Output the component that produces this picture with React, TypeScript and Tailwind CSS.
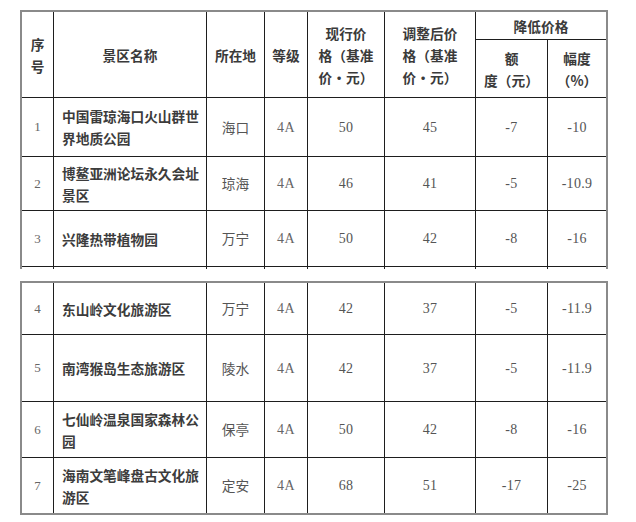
const cols = 'grid-cols-[31px_152px_57px_42px_76px_90px_71px_58px]';

type Row = {
  no: string;
  name: string[];
  place: string;
  level: string;
  now: string;
  after: string;
  diff: string;
  pct: string;
};

const topRows: Row[] = [
  { no: '1', name: ['中国雷琼海口火山群世', '界地质公园'], place: '海口', level: '4A', now: '50', after: '45', diff: '-7', pct: '-10' },
  { no: '2', name: ['博鳌亚洲论坛永久会址', '景区'], place: '琼海', level: '4A', now: '46', after: '41', diff: '-5', pct: '-10.9' },
  { no: '3', name: ['兴隆热带植物园'], place: '万宁', level: '4A', now: '50', after: '42', diff: '-8', pct: '-16' },
];

const bottomRows: Row[] = [
  { no: '4', name: ['东山岭文化旅游区'], place: '万宁', level: '4A', now: '42', after: '37', diff: '-5', pct: '-11.9' },
  { no: '5', name: ['南湾猴岛生态旅游区'], place: '陵水', level: '4A', now: '42', after: '37', diff: '-5', pct: '-11.9' },
  { no: '6', name: ['七仙岭温泉国家森林公', '园'], place: '保亭', level: '4A', now: '50', after: '42', diff: '-8', pct: '-16' },
  { no: '7', name: ['海南文笔峰盘古文化旅', '游区'], place: '定安', level: '4A', now: '68', after: '51', diff: '-17', pct: '-25' },
];

const cjk = "font-['Noto_Sans_CJK_SC',sans-serif]";
const serif = "font-['Liberation_Serif',serif]";

function Head({ lines, className = '' }: { lines: string[]; className?: string }) {
  return (
    <div className={`bg-white flex flex-col items-center justify-center text-center text-[13.7px] leading-[22px] font-bold text-[#3a3a3a] ${cjk} ${className}`}>
      {lines.map((l) => (
        <span key={l}>{l}</span>
      ))}
    </div>
  );
}

function Num({ children }: { children: string }) {
  return (
    <div className={`bg-white flex items-center justify-center text-[14px] text-[#555] tracking-[0.3px] ${serif}`}>
      {children}
    </div>
  );
}

function DataRow({ row }: { row: Row }) {
  return (
    <>
      <div className={`bg-white flex items-center justify-center text-[13px] text-[#666] ${serif}`}>
        {row.no}
      </div>
      <div className={`bg-white flex flex-col justify-center pl-2 text-[13.7px] leading-[22px] font-bold text-[#3c3c3c] ${cjk}`}>
        {row.name.map((l) => (
          <span key={l}>{l}</span>
        ))}
      </div>
      <div className={`bg-white flex items-center justify-center text-[13.7px] text-[#555] ${cjk}`}>
        {row.place}
      </div>
      <div className={`bg-white flex items-center justify-center text-[14px] text-[#666] tracking-[0.5px] ${serif}`}>
        {row.level}
      </div>
      <Num>{row.now}</Num>
      <Num>{row.after}</Num>
      <Num>{row.diff}</Num>
      <Num>{row.pct}</Num>
    </>
  );
}

export default function App() {
  return (
    <div className="w-[636px] h-[522px] bg-white pt-[10px] pl-[20px]">
      {/* First part of the table, cut at the bottom */}
      <div className={`w-[588px] grid ${cols} grid-rows-[27px_57px_58px_53px_55px_2px] gap-px bg-[#1e1e1e] border-2 border-b-0 border-[#8a8a8a]`}>
        <Head lines={['序', '号']} className="row-span-2" />
        <Head lines={['景区名称']} className="row-span-2" />
        <Head lines={['所在地']} className="row-span-2" />
        <Head lines={['等级']} className="row-span-2" />
        <Head lines={['现行价', '格（基准', '价・元）']} className="row-span-2" />
        <Head lines={['调整后价', '格（基准', '价・元）']} className="row-span-2" />
        <Head lines={['降低价格']} className="col-span-2" />
        <Head lines={['额', '度（元）']} />
        <Head lines={['幅度', '（%）']} />
        {topRows.map((r) => (
          <DataRow key={r.no} row={r} />
        ))}
        {Array.from({ length: 8 }).map((_, i) => (
          <div key={i} className="bg-white" />
        ))}
      </div>

      {/* Second part of the table */}
      <div className={`mt-[12px] w-[588px] grid ${cols} grid-rows-[51px_66px_55px_55px] gap-px bg-[#1e1e1e] border-2 border-[#8a8a8a]`}>
        {bottomRows.map((r) => (
          <DataRow key={r.no} row={r} />
        ))}
      </div>
    </div>
  );
}
